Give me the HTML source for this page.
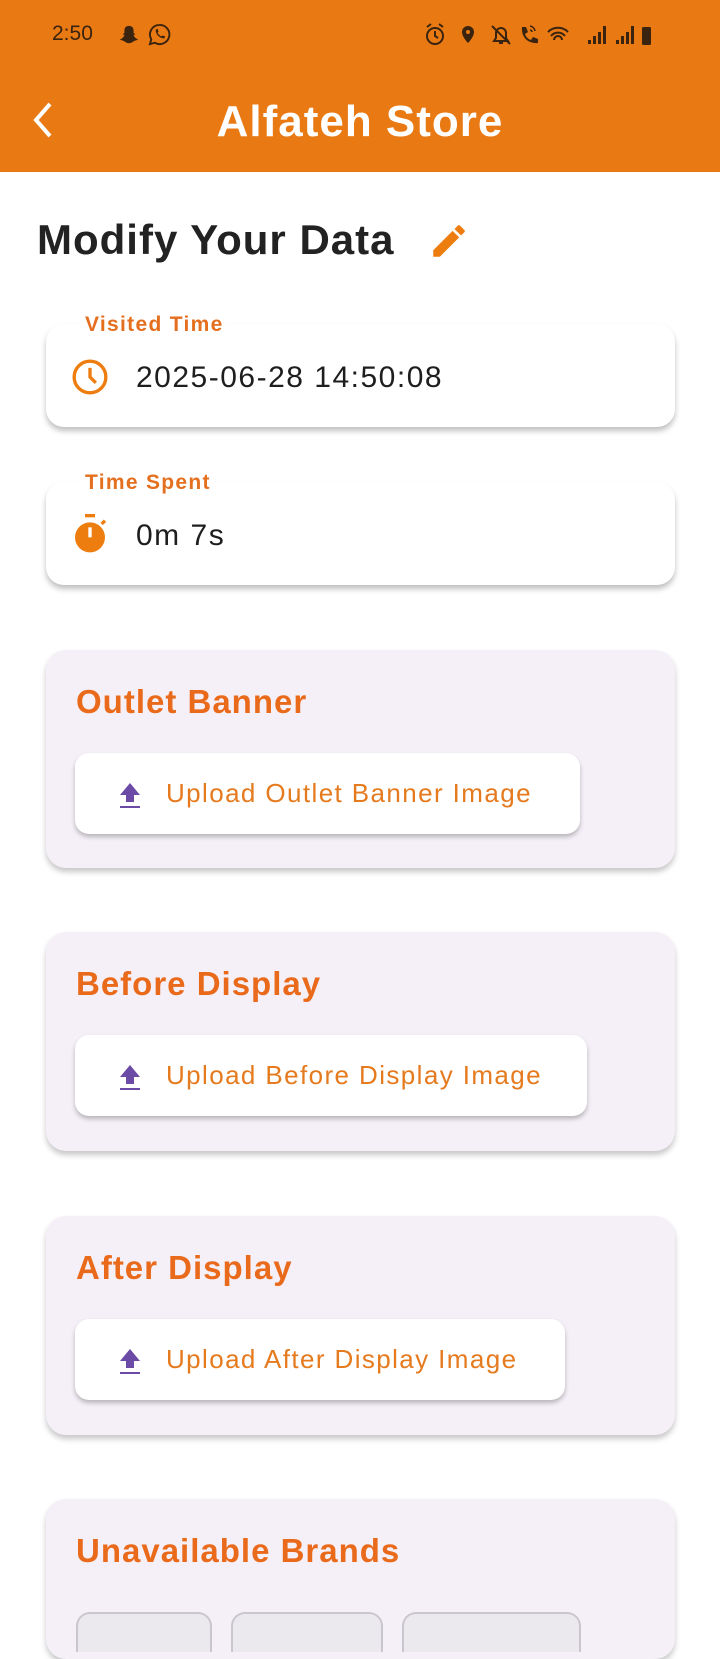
<!DOCTYPE html>
<html><head><meta charset="utf-8"><style>
*{box-sizing:border-box;margin:0;padding:0}
body{width:720px;height:1628px;overflow:hidden;background:#fff;font-family:"Liberation Sans",sans-serif;position:relative}
.hdr{position:absolute;left:0;top:0;width:720px;height:172px;background:#e97912}
.st{position:absolute;top:22px;left:52px;font-size:21px;color:#3a2410}
.title{position:absolute;top:97px;width:720px;text-align:center;color:#fff;font-weight:bold;font-size:44px;letter-spacing:1px}
.abs{position:absolute}
.card{position:absolute;left:46px;width:629px;background:#fff;border-radius:18px;box-shadow:0 4px 6px rgba(0,0,0,.25)}
.lbl{position:absolute;left:83px;font-size:21px;font-weight:bold;color:#e46f1f;background:#fff;padding:0 2px;letter-spacing:1.3px}
.val{position:absolute;left:90px;font-size:30px;color:#1e1e1e;letter-spacing:1.5px}
.sec{position:absolute;left:46px;width:629px;background:#f5f0f8;border-radius:20px;box-shadow:0 4px 6px rgba(0,0,0,.22)}
.sec h2{position:absolute;left:30px;top:33px;font-size:33px;font-weight:bold;color:#ea6a1b;letter-spacing:1px}
.btn{position:absolute;left:29px;top:103px;height:81px;background:#fff;border-radius:14px;box-shadow:0 3px 5px rgba(0,0,0,.25);font-size:26px;color:#e57a1e;padding-left:91px;line-height:81px;letter-spacing:1.4px;white-space:nowrap}
.btn svg{position:absolute;left:43px;top:28px}
.chip{position:absolute;top:113px;height:40px;border:2px solid #c9c6cd;border-bottom:none;border-radius:14px 14px 0 0;background:#ece9ee}
</style></head><body>
<div class="hdr">
 <div class="st">2:50</div>
 <svg class="abs" style="left:118px;top:24px" width="22" height="22" viewBox="0 0 24 24"><path d="M12 2c3 0 5 2 5 5v3l2 1-2 1c1 3 3 4 5 5-2 1-4 1-5 2-1 1-3 2-5 2s-4-1-5-2c-1-1-3-1-5-2 2-1 4-2 5-5l-2-1 2-1V7c0-3 2-5 5-5z" fill="#3a2410"/></svg>
 <svg class="abs" style="left:148px;top:23px" width="23" height="23" viewBox="0 0 24 24"><path d="M12 2a10 10 0 0 0-8.6 15L2 22l5.2-1.4A10 10 0 1 0 12 2z" fill="none" stroke="#3a2410" stroke-width="2"/><path d="M8 7c0 5 4 9 9 9l1-2-3-1-1 1c-2-1-3-2-4-4l1-1-1-3z" fill="#3a2410"/></svg>
 <svg class="abs" style="left:424px;top:22px" width="150" height="26" viewBox="0 0 150 26">
  <circle cx="11" cy="14" r="8" fill="none" stroke="#3a2410" stroke-width="2"/><path d="M11 9v5l3 2M3 5l4-3M19 5l-4-3" fill="none" stroke="#3a2410" stroke-width="2"/>
  <path d="M44 4a6 6 0 0 1 6 6c0 5-6 11-6 11s-6-6-6-11a6 6 0 0 1 6-6z" fill="#3a2410"/><circle cx="44" cy="10" r="2" fill="#e97912"/>
  <path d="M70 19h14l-2-3v-5a5 5 0 0 0-10 0v5zM75 21h4M68 4l18 18" fill="none" stroke="#3a2410" stroke-width="2"/>
  <path d="M98 5l4 0 2 5-3 2c1 3 3 5 6 6l2-3 5 2v4c-10 1-17-6-16-16z" fill="#3a2410"/><path d="M106 4a6 6 0 0 1 5 5M106 8a2 2 0 0 1 2 2" fill="none" stroke="#3a2410" stroke-width="1.5"/>
  <path d="M124 10a14 14 0 0 1 20 0M127 14a9 9 0 0 1 14 0M130 18a4 4 0 0 1 8 0" fill="none" stroke="#3a2410" stroke-width="2"/>
 </svg>
 <svg class="abs" style="left:586px;top:24px" width="70" height="22" viewBox="0 0 70 22"><path d="M2 20h3v-4H2zM7 20h3v-8H7zM12 20h3V8h-3zM17 20h3V2h-3zM30 20h3v-4h-3zM35 20h3v-8h-3zM40 20h3V8h-3zM45 20h3V2h-3z" fill="#3a2410"/><rect x="56" y="3" width="9" height="18" rx="1.5" fill="#3a2410"/></svg>
 <svg class="abs" style="left:28px;top:100px" width="30" height="40" viewBox="0 0 30 40"><path d="M22 4L8 20l14 16" fill="none" stroke="#fff" stroke-width="4"/></svg>
 <div class="title">Alfateh Store</div>
</div>
<div class="abs" style="left:37px;top:216px;font-size:42px;color:#222;font-weight:bold;letter-spacing:1px">Modify Your Data</div>
<svg class="abs" style="left:428px;top:220px" width="42" height="42" viewBox="0 0 24 24"><path d="M3 17.25V21h3.75L17.81 9.94l-3.75-3.75L3 17.25zM20.71 7.04a1 1 0 0 0 0-1.41l-2.34-2.34a1 1 0 0 0-1.41 0l-1.83 1.83 3.75 3.75 1.83-1.83z" fill="#ee7d10"/></svg>

<div class="card" style="top:324px;height:103px">
 <svg class="abs" style="left:24px;top:33px" width="40" height="40" viewBox="0 0 24 24"><circle cx="12" cy="12" r="9.5" fill="none" stroke="#ee7d10" stroke-width="2"/><path d="M12 6.5V12l3.5 3.5" fill="none" stroke="#ee7d10" stroke-width="2"/></svg>
 <div class="val" style="top:37px">2025-06-28 14:50:08</div>
</div>
<div class="lbl" style="top:313px">Visited Time</div>

<div class="card" style="top:482px;height:103px">
 <svg class="abs" style="left:24px;top:30px" width="40" height="44" viewBox="0 0 24 26"><rect x="9" y="1" width="6" height="2" fill="#ee7d10"/><circle cx="12" cy="15" r="9" fill="#ee7d10"/><rect x="11" y="9" width="2" height="6" fill="#fff"/><path d="M19 7l2-2" stroke="#ee7d10" stroke-width="2"/></svg>
 <div class="val" style="top:37px">0m 7s</div>
</div>
<div class="lbl" style="top:471px">Time Spent</div>

<div class="sec" style="top:650px;height:218px"><h2>Outlet Banner</h2>
 <div class="btn" style="width:505px"><svg width="24" height="28" viewBox="0 0 24 28"><path d="M12 2L2 14h6v7h8v-7h6z M2 25h20v2H2z" fill="#6b4ba6"/></svg>Upload Outlet Banner Image</div></div>

<div class="sec" style="top:932px;height:219px"><h2>Before Display</h2>
 <div class="btn" style="width:512px"><svg width="24" height="28" viewBox="0 0 24 28"><path d="M12 2L2 14h6v7h8v-7h6z M2 25h20v2H2z" fill="#6b4ba6"/></svg>Upload Before Display Image</div></div>

<div class="sec" style="top:1216px;height:219px"><h2>After Display</h2>
 <div class="btn" style="width:490px"><svg width="24" height="28" viewBox="0 0 24 28"><path d="M12 2L2 14h6v7h8v-7h6z M2 25h20v2H2z" fill="#6b4ba6"/></svg>Upload After Display Image</div></div>

<div class="sec" style="top:1499px;height:160px"><h2>Unavailable Brands</h2>
 <div class="chip" style="left:30px;width:136px"></div>
 <div class="chip" style="left:185px;width:152px"></div>
 <div class="chip" style="left:356px;width:179px"></div>
</div>
</body></html>
